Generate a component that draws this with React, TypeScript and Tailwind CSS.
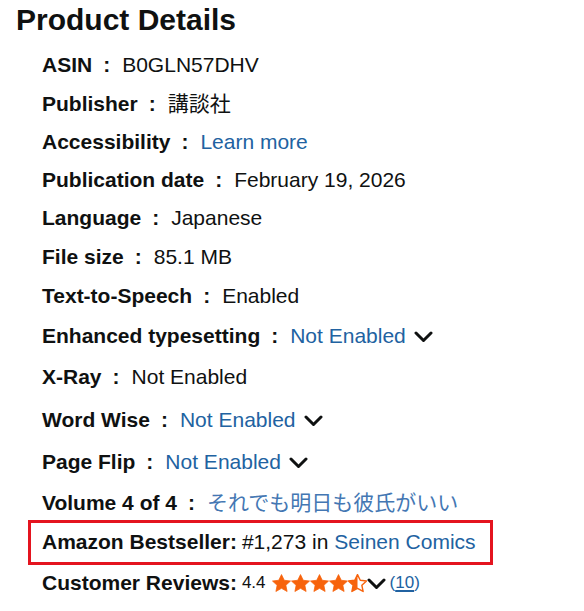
const LINK = 'text-[#2162a1]'

type Row = {
    label: string
    value: React.ReactNode
    h: string
    chevron?: boolean
}

const rows: Row[] = [
    { label: 'ASIN', value: 'B0GLN57DHV', h: 'h-[38px]' },
    { label: 'Publisher', value: '講談社', h: 'h-[39px]' },
    { label: 'Accessibility', value: <span className={LINK}>Learn more</span>, h: 'h-[38px]' },
    { label: 'Publication date', value: 'February 19, 2026', h: 'h-[38px]' },
    { label: 'Language', value: 'Japanese', h: 'h-[38px]' },
    { label: 'File size', value: '85.1 MB', h: 'h-[39px]' },
    { label: 'Text-to-Speech', value: 'Enabled', h: 'h-[39px]' },
    { label: 'Enhanced typesetting', value: <span className={LINK}>Not Enabled</span>, h: 'h-[41px]', chevron: true },
    { label: 'X-Ray', value: 'Not Enabled', h: 'h-[42px]' },
    { label: 'Word Wise', value: <span className={LINK}>Not Enabled</span>, h: 'h-[43px]', chevron: true },
    { label: 'Page Flip', value: <span className={LINK}>Not Enabled</span>, h: 'h-[42px]', chevron: true },
    { label: 'Volume 4 of 4', value: <span className="text-[#4477b3]">それでも明日も彼氏がいい</span>, h: 'h-[39px]' },
]

function Chevron({ className = '' }: { className?: string }) {
    return (
        <svg width="19" height="12" viewBox="0 0 19 12" className={className}>
            <polyline points="2,2 9.5,9.5 17,2" fill="none" stroke="#0f1111" strokeWidth="3" strokeLinecap="round" strokeLinejoin="round" />
        </svg>
    )
}

function Star({ fill }: { fill: 'full' | 'half' }) {
    const d = 'M10 0.6l2.9 6 6.6.8-4.9 4.5 1.3 6.5-5.9-3.3-5.9 3.3 1.3-6.5L0.5 7.4l6.6-.8z'
    return (
        <svg width="19" height="19" viewBox="0 0 20 20">
            <defs>
                <clipPath id="half">
                    <rect x="0" y="0" width="10" height="20" />
                </clipPath>
            </defs>
            {fill === 'full' ? (
                <path d={d} fill="#f7630c" stroke="#f7630c" strokeWidth="0.8" strokeLinejoin="round" />
            ) : (
                <>
                    <path d={d} fill="#fff" stroke="#f7630c" strokeWidth="1.5" strokeLinejoin="round" />
                    <path d={d} fill="#f7630c" clipPath="url(#half)" />
                </>
            )}
        </svg>
    )
}

export default function App() {
    return (
        <div className="w-[584px] h-[611px] bg-white text-[#0f1111] overflow-hidden" style={{ fontFamily: '"Liberation Sans", Arial, "Noto Sans CJK JP", sans-serif' }}>
            <h2 className="pl-4 pt-[2px] h-[46px] text-[30px] leading-[35px] font-bold">Product Details</h2>
            <div className="text-[21px]">
                {rows.map((r) => (
                    <div key={r.label} className={`${r.h} flex items-center pl-[42px]`}>
                        <span className="font-bold">{r.label}</span>
                        <span className="font-bold ml-[11px] mr-[12px]">:</span>
                        {r.value}
                        {r.chevron && <Chevron className="ml-[8px] mt-[2px]" />}
                    </div>
                ))}
                <div className="h-[40px] flex items-center">
                    <div className="ml-[28px] w-[465px] h-[45px] border-[3px] border-[#e4141f] flex items-center pl-[11px]">
                        <span className="font-bold">Amazon Bestseller:</span>
                        <span className="ml-[5px]">#1,273 in</span>
                        <span className={`ml-[6px] ${LINK}`}>Seinen Comics</span>
                    </div>
                </div>
                <div className="h-[42px] flex items-center pl-[42px]">
                    <span className="font-bold">Customer Reviews:</span>
                    <span className="ml-[5px] text-[17px]">4.4</span>
                    <span className="ml-[6px] flex">
                        <Star fill="full" />
                        <Star fill="full" />
                        <Star fill="full" />
                        <Star fill="full" />
                        <Star fill="half" />
                    </span>
                    <Chevron className="mt-[2px]" />
                    <span className={`ml-[4px] text-[17px] ${LINK}`}>
                        (<span className="underline decoration-2 underline-offset-2">10</span>)
                    </span>
                </div>
            </div>
        </div>
    )
}
